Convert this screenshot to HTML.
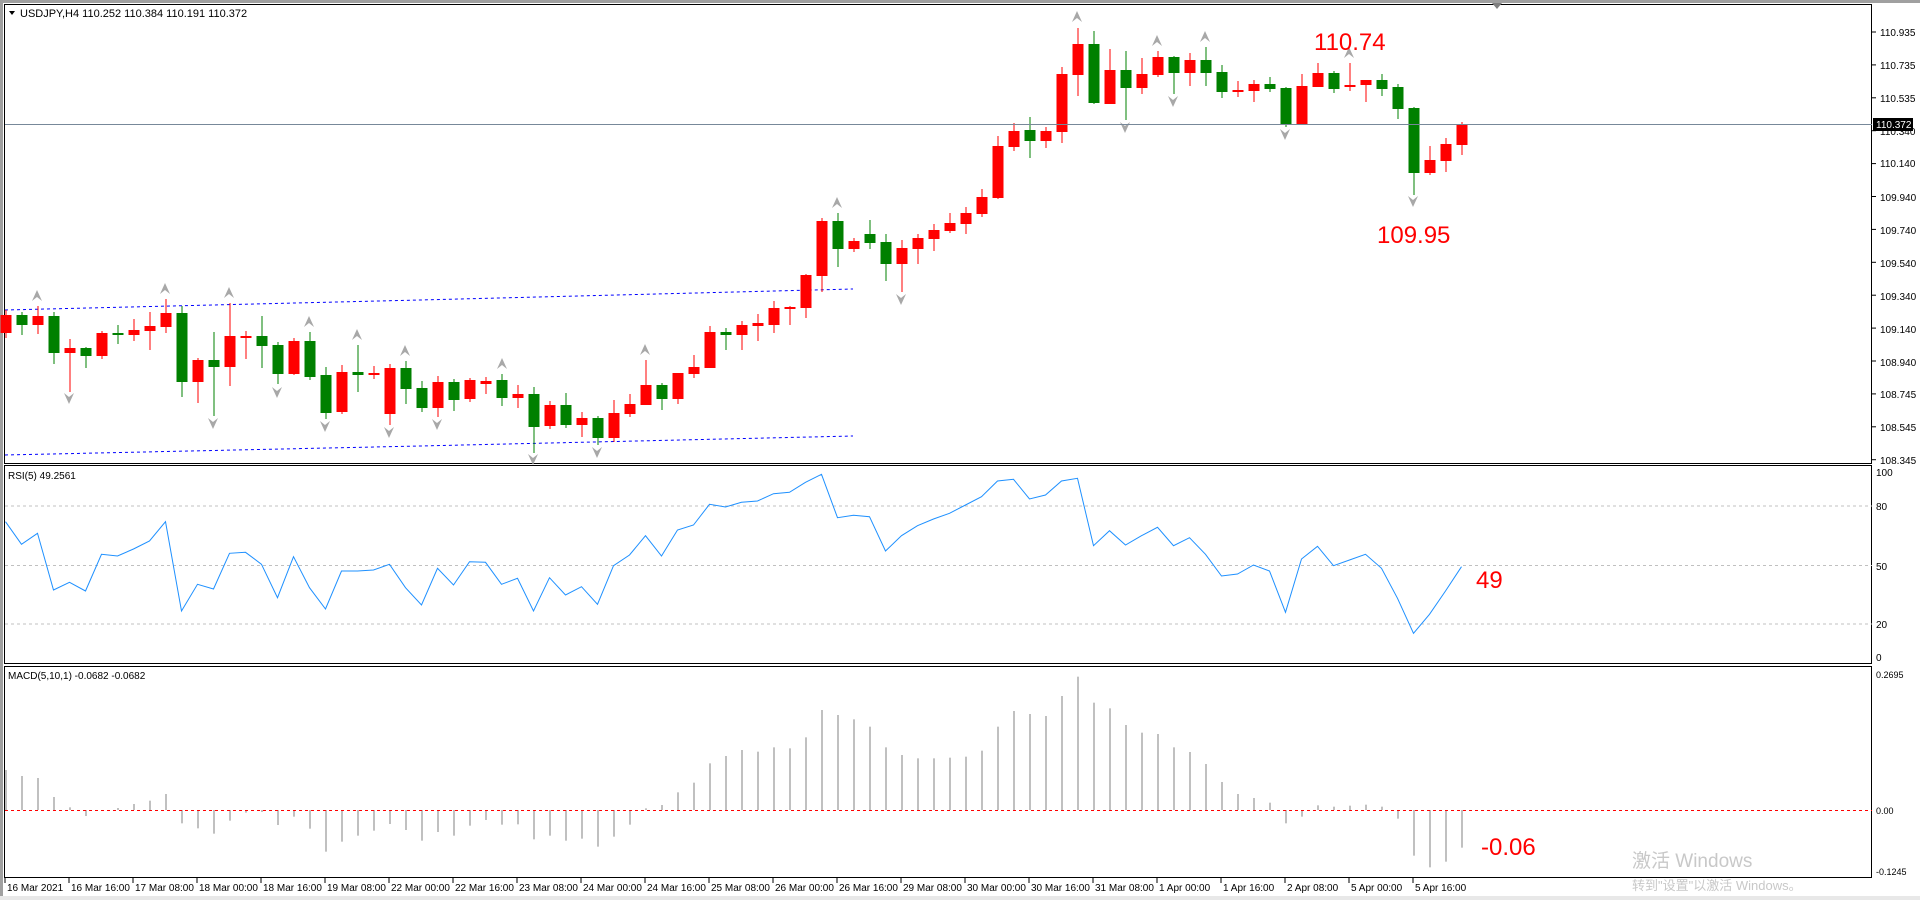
<!DOCTYPE html>
<html><head><meta charset="utf-8"><style>
html,body{margin:0;padding:0;background:#fff;width:1920px;height:900px;overflow:hidden}
svg{display:block}
text{font-family:"Liberation Sans","Noto Sans CJK SC",sans-serif}
.ax{font-size:10px;fill:#000}
</style></head><body>
<svg id="s" width="1920" height="900" viewBox="0 0 1920 900" xmlns="http://www.w3.org/2000/svg">
<rect x="0" y="0" width="1920" height="900" fill="#fff"/>
<rect x="0" y="0" width="1920" height="3" fill="#a0a0a0"/>
<rect x="0" y="0" width="3" height="900" fill="#a0a0a0"/>
<rect x="0" y="896" width="1920" height="4" fill="#e8e8e8"/>
<!-- pane borders -->
<rect x="4.5" y="4.5" width="1867" height="459" fill="none" stroke="#000"/>
<rect x="4.5" y="465.5" width="1867" height="198" fill="none" stroke="#000"/>
<rect x="4.5" y="666.5" width="1867" height="211" fill="none" stroke="#000"/>
<g id="g"></g>
<!-- current price line -->
<line x1="5" y1="124.5" x2="1872" y2="124.5" stroke="#778899" stroke-width="1"/>
<!-- header -->
<polygon points="9,11 15,11 12,15" fill="#000"/>
<text x="20" y="17" font-size="11">USDJPY,H4  110.252 110.384 110.191 110.372</text>
<text x="8" y="479" font-size="10">RSI(5) 49.2561</text>
<text x="8" y="679" font-size="10">MACD(5,10,1) -0.0682 -0.0682</text>
<polygon points="1492,3 1502,3 1497,9" fill="#808080"/>
<!-- price axis -->
<g class="ax">
<text x="1880" y="36">110.935</text>
<text x="1880" y="69">110.735</text>
<text x="1880" y="102">110.535</text>
<text x="1880" y="135">110.340</text>
<text x="1880" y="167">110.140</text>
<text x="1880" y="201">109.940</text>
<text x="1880" y="234">109.740</text>
<text x="1880" y="267">109.540</text>
<text x="1880" y="300">109.340</text>
<text x="1880" y="333">109.140</text>
<text x="1880" y="366">108.940</text>
<text x="1880" y="398">108.745</text>
<text x="1880" y="431">108.545</text>
<text x="1880" y="464">108.345</text>
<text x="1876" y="476">100</text>
<text x="1876" y="510">80</text>
<text x="1876" y="570">50</text>
<text x="1876" y="628">20</text>
<text x="1876" y="661">0</text>
<text x="1876" y="678" font-size="9">0.2695</text>
<text x="1876" y="814" font-size="9">0.00</text>
<text x="1876" y="875" font-size="9">-0.1245</text>
</g>
<rect x="1873" y="118" width="40" height="13" fill="#000"/>
<text x="1876" y="128" font-size="10" fill="#fff">110.372</text>
<!-- time axis -->
<g class="ax" font-size="10">
<text x="7" y="891">16 Mar 2021</text>
<text x="71" y="891">16 Mar 16:00</text>
<text x="135" y="891">17 Mar 08:00</text>
<text x="199" y="891">18 Mar 00:00</text>
<text x="263" y="891">18 Mar 16:00</text>
<text x="327" y="891">19 Mar 08:00</text>
<text x="391" y="891">22 Mar 00:00</text>
<text x="455" y="891">22 Mar 16:00</text>
<text x="519" y="891">23 Mar 08:00</text>
<text x="583" y="891">24 Mar 00:00</text>
<text x="647" y="891">24 Mar 16:00</text>
<text x="711" y="891">25 Mar 08:00</text>
<text x="775" y="891">26 Mar 00:00</text>
<text x="839" y="891">26 Mar 16:00</text>
<text x="903" y="891">29 Mar 08:00</text>
<text x="967" y="891">30 Mar 00:00</text>
<text x="1031" y="891">30 Mar 16:00</text>
<text x="1095" y="891">31 Mar 08:00</text>
<text x="1159" y="891">1 Apr 00:00</text>
<text x="1223" y="891">1 Apr 16:00</text>
<text x="1287" y="891">2 Apr 08:00</text>
<text x="1351" y="891">5 Apr 00:00</text>
<text x="1415" y="891">5 Apr 16:00</text>
</g>
<!-- big labels -->
<text x="1314" y="50" font-size="24" fill="#ff0000">110.74</text>
<text x="1377" y="243" font-size="24" fill="#ff0000">109.95</text>
<text x="1476" y="588" font-size="24" fill="#ff0000">49</text>
<text x="1481" y="855" font-size="24" fill="#ff0000">-0.06</text>
<!-- watermark -->
<text x="1632" y="867" font-size="19" fill="#c8c8c8">激活 Windows</text>
<text x="1632" y="890" font-size="13" fill="#c8c8c8">转到"设置"以激活 Windows。</text>
</svg>
<script>
var NS="http://www.w3.org/2000/svg",g=document.getElementById("g"),h="";
function X(i){return 5.5+16*i;}
// ticks on axis
for(var k=0;k<14;k++){var y=32+k*32.9;h+='<line x1="1872" y1="'+y+'" x2="1876" y2="'+y+'" stroke="#000"/>';}
for(k=0;k<23;k++){var x=5+64*k;h+='<line x1="'+x+'" y1="878" x2="'+x+'" y2="883" stroke="#000"/>';}
// RSI levels
[506,565.5,624].forEach(function(y){h+='<line x1="5" y1="'+y+'" x2="1872" y2="'+y+'" stroke="#c0c0c0" stroke-dasharray="3,3"/>';});
// channel
h+='<polyline points="5,310 420,300 853,289" fill="none" stroke="#0000ff" stroke-dasharray="3,3"/>';
h+='<polyline points="5,455 420,446 853,436" fill="none" stroke="#0000ff" stroke-dasharray="3,3"/>';
var C=[["r",315,333,310,338],["g",315,325,312,335],["r",316,325,306,334],["g",316,353,312,364],["r",348,353,339,392],["g",348,356,347,368],["r",333,356,331,359],["g",333,335,325,344],["r",330,335,319,341],["r",326,331,312,350],["r",313,327,299,333],["g",313,382,306,397],["r",360,382,358,403],["g",360,367,332,416],["r",336,367,303,386],["r",336,337,331,359],["g",336,346,316,368],["g",345,374,342,384],["r",341,374,338,375],["g",341,377,332,380],["g",375,413,367,419],["r",372,412,365,414],["g",372,375,345,392],["r",373,375,366,379],["r",368,414,364,425],["g",368,389,361,404],["g",388,408,381,412],["r",382,408,376,417],["g",382,400,379,411],["r",380,399,378,402],["r",381,384,377,394],["g",380,398,374,406],["r",394,398,385,408],["g",394,427,387,453],["r",405,426,401,429],["g",405,425,393,428],["r",418,425,412,437],["g",418,438,416,445],["r",413,438,400,442],["r",404,414,394,417],["r",385,405,360,405],["g",385,399,383,410],["r",373,399,373,404],["r",367,374,355,378],["r",332,368,326,368],["g",332,335,328,350],["r",325,335,321,350],["r",323,326,314,341],["r",308,325,301,333],["r",307,309,306,325],["r",275,308,274,318],["r",221,276,218,292],["g",221,249,213,267],["r",241,249,238,252],["g",234,243,220,249],["g",242,264,234,281],["r",248,264,240,292],["r",238,249,234,264],["r",230,239,224,251],["r",223,231,213,233],["r",213,224,207,234],["r",197,214,189,217],["r",146,198,136,199],["r",131,147,123,151],["g",130,141,117,158],["r",131,141,127,148],["r",74,132,67,143],["r",44,75,28,96],["g",44,103,31,104],["r",70,104,49,104],["g",70,88,51,120],["r",74,88,58,94],["r",57,75,51,77],["g",57,73,56,94],["r",60,73,53,86],["g",60,73,47,86],["g",72,92,65,98],["r",90,92,81,97],["r",84,91,80,102],["g",84,89,77,92],["g",88,124,87,127],["r",86,124,74,125],["r",73,87,63,87],["g",73,89,71,93],["r",85,87,63,91],["r",80,85,80,102],["g",80,89,74,96],["g",87,109,84,119],["g",108,173,107,195],["r",160,173,146,175],["r",144,161,138,172],["r",124,145,122,155]];
C.forEach(function(c,i){var col=c[0]=="r"?"#ff0000":"#008000",x=X(i);
h+='<line x1="'+(x+.5)+'" y1="'+c[3]+'" x2="'+(x+.5)+'" y2="'+c[4]+'" stroke="'+col+'"/>';
var hh=Math.max(2,c[2]-c[1]);h+='<rect x="'+(x-5)+'" y="'+c[1]+'" width="11" height="'+hh+'" fill="'+col+'"/>';});
// fractals
var U=[[37,296],[165,289],[229,293],[309,322],[357,335],[405,351],[502,364],[645,350],[837,203],[1077,17],[1157,41],[1205,37],[1349,53]];
var D=[[69,398],[213,423],[277,392],[325,426],[389,432],[437,424],[533,459],[597,452],[901,299],[1125,127],[1173,101],[1285,134],[1413,201]];
U.forEach(function(p){var x=p[0],y=p[1];h+='<polygon points="'+x+','+(y-6)+' '+(x+5)+','+(y+5)+' '+x+','+(y+1)+' '+(x-5)+','+(y+5)+'" fill="#a8a8a8"/>';});
D.forEach(function(p){var x=p[0],y=p[1];h+='<polygon points="'+x+','+(y+6)+' '+(x+5)+','+(y-5)+' '+x+','+(y-1)+' '+(x-5)+','+(y-5)+'" fill="#a8a8a8"/>';});
// RSI
var R=[170,238,205,375,352,378,268,273,252,228,170,438,358,372,265,262,298,398,275,368,432,318,318,315,298,368,420,310,360,290,292,358,340,438,338,390,365,418,302,270,212,273,195,180,118,126,112,108,86,82,52,28,158,151,155,258,212,182,162,145,120,95,48,43,102,90,48,40,242,197,240,212,187,242,218,268,333,327,300,318,442,282,244,302,285,268,310,400,505,448,378,305];
var pts=R.map(function(v,i){return X(i)+','+(465+v/3).toFixed(1);}).join(' ');
h+='<polyline points="'+pts+'" fill="none" stroke="#1e90ff" stroke-width="1"/>';
// MACD
var M=[330,348,354,411,442,468,452,444,432,422,402,490,505,521,482,458,456,495,470,506,575,545,527,512,492,510,542,516,527,497,480,494,493,538,527,542,536,560,530,494,445,435,397,368,310,288,270,275,262,265,232,150,165,178,200,262,285,295,295,293,290,272,200,153,162,168,108,50,128,145,195,218,222,262,276,312,366,402,414,428,490,470,436,440,437,434,440,476,587,622,605,563];
M.forEach(function(v,i){var y=660+v/3,x=X(i);h+='<rect x="'+(x-0.5)+'" y="'+Math.min(y,810)+'" width="2" height="'+Math.max(1,Math.abs(y-810))+'" fill="#c0c0c0"/>';});
h+='<line x1="5" y1="810.5" x2="1872" y2="810.5" stroke="#ff0000" stroke-dasharray="3,3"/>';
g.innerHTML=h;
</script>
</body></html>
